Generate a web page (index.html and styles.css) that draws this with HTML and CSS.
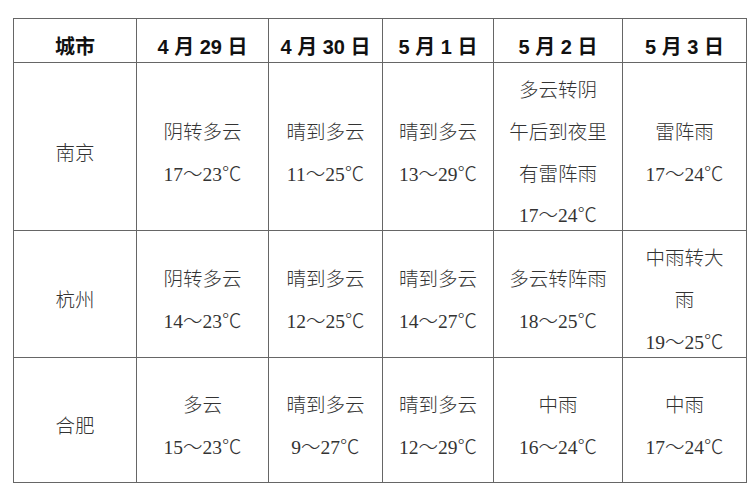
FILE: index.html
```html
<!DOCTYPE html>
<html lang="zh">
<head>
<meta charset="utf-8">
<title>天气预报</title>
<link rel="stylesheet" href="styles.css">
</head>
<body>
<table class="weather">
  <colgroup>
    <col class="c-city">
    <col class="c-d1">
    <col class="c-d2">
    <col class="c-d3">
    <col class="c-d4">
    <col class="c-d5">
  </colgroup>
  <thead>
    <tr class="head">
      <th>城市</th>
      <th>4 月 29 日</th>
      <th>4 月 30 日</th>
      <th>5 月 1 日</th>
      <th>5 月 2 日</th>
      <th>5 月 3 日</th>
    </tr>
  </thead>
  <tbody>
    <tr class="r1">
      <td class="city"><div class="cell">南京</div></td>
      <td><div class="cell">阴转多云<br>17～23℃</div></td>
      <td><div class="cell">晴到多云<br>11～25℃</div></td>
      <td><div class="cell">晴到多云<br>13～29℃</div></td>
      <td><div class="cell">多云转阴<br>午后到夜里<br>有雷阵雨<br>17～24℃</div></td>
      <td><div class="cell">雷阵雨<br>17～24℃</div></td>
    </tr>
    <tr class="r2">
      <td class="city"><div class="cell">杭州</div></td>
      <td><div class="cell">阴转多云<br>14～23℃</div></td>
      <td><div class="cell">晴到多云<br>12～25℃</div></td>
      <td><div class="cell">晴到多云<br>14～27℃</div></td>
      <td><div class="cell">多云转阵雨<br>18～25℃</div></td>
      <td><div class="cell">中雨转大<br>雨<br>19～25℃</div></td>
    </tr>
    <tr class="r3">
      <td class="city"><div class="cell">合肥</div></td>
      <td><div class="cell">多云<br>15～23℃</div></td>
      <td><div class="cell">晴到多云<br>9～27℃</div></td>
      <td><div class="cell">晴到多云<br>12～29℃</div></td>
      <td><div class="cell">中雨<br>16～24℃</div></td>
      <td><div class="cell">中雨<br>17～24℃</div></td>
    </tr>
  </tbody>
</table>
</body>
</html>
```
FILE: styles.css
```css
html, body {
  margin: 0;
  padding: 0;
  background: #ffffff;
}
body {
  padding: 18px 0 0 13px;
}
.weather {
  border-collapse: collapse;
  table-layout: fixed;
  width: 733px;
  color: #333333;
  font-family: "Liberation Serif", "Noto Sans CJK SC", serif;
  font-size: 19.5px;
}
.c-city { width: 123px; }
.c-d1 { width: 132px; }
.c-d2 { width: 114px; }
.c-d3 { width: 111px; }
.c-d4 { width: 129px; }
.c-d5 { width: 124px; }
.weather th,
.weather td {
  border: 1px solid #666666;
  padding: 0;
  text-align: center;
  vertical-align: middle;
}
.weather th {
  font-family: "Liberation Sans", "Noto Sans CJK SC", sans-serif;
  font-weight: bold;
  font-size: 20px;
  color: #111111;
  padding-top: 10px;
}
.weather td {
  line-height: 41.75px;
  font-weight: 300;
}
.cell {
  padding-top: 7px;
  margin-bottom: -7px;
}
.weather td.city {
  font-size: 19.5px;
}
.head { height: 44px; }
.r1 { height: 167px; }
.r2 { height: 127px; }
.r3 { height: 125px; }
```
